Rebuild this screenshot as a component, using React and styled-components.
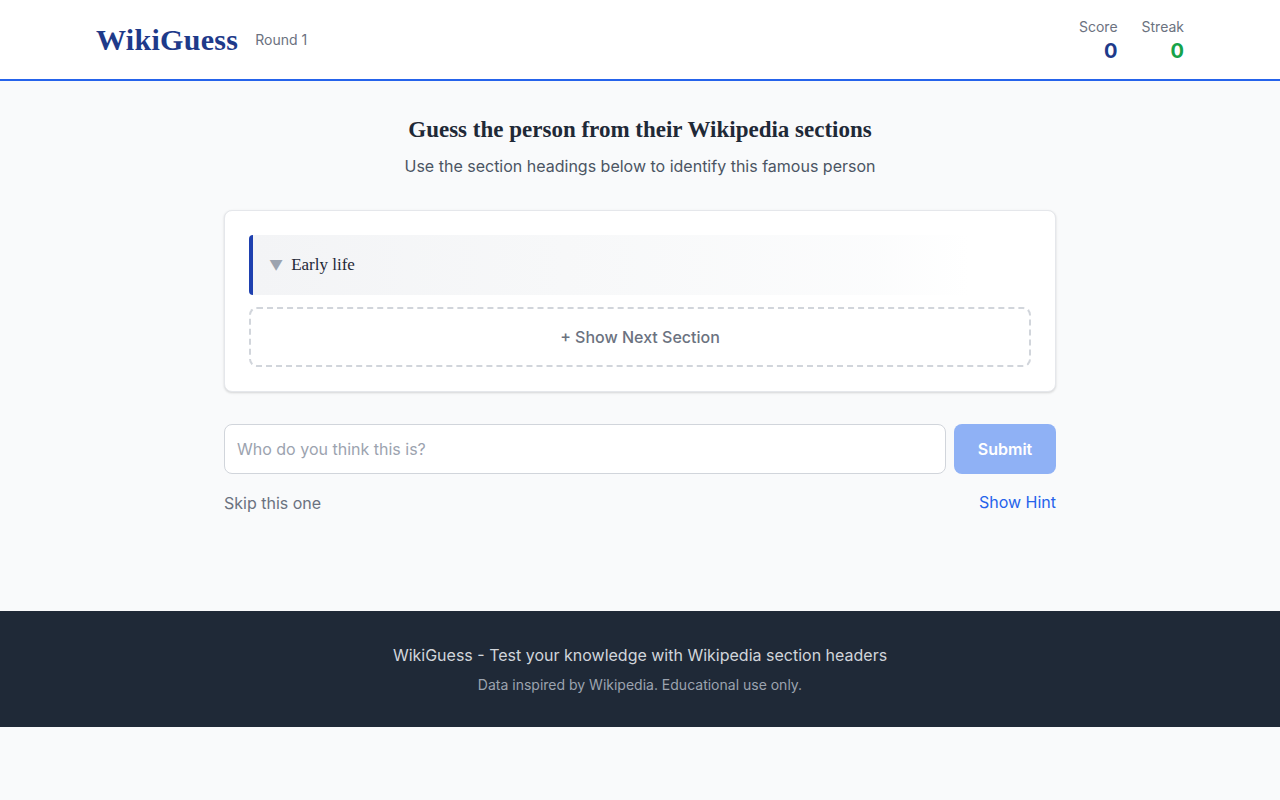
import React from "react";
import styled, { createGlobalStyle } from "styled-components";

const GlobalStyle = createGlobalStyle`
  * { box-sizing: border-box; }
  body {
    margin: 0;
    background: #f9fafb;
    font-family: Inter, "Noto Sans", sans-serif;
    color: #1f2937;
  }
`;

const serif = `"Liberation Serif", "DejaVu Serif", serif`;

const Page = styled.div`
  display: flex;
  flex-direction: column;
`;

const Header = styled.header`
  background: #ffffff;
  border-bottom: 2px solid #2563eb;
  height: 81px;
`;

const HeaderInner = styled.div`
  width: 1088px;
  margin: 0 auto;
  height: 79px;
  display: flex;
  align-items: center;
  justify-content: space-between;
`;

const Brand = styled.div`
  display: flex;
  align-items: center;
  gap: 17px;
`;

const Logo = styled.h1`
  margin: 0;
  font-family: ${serif};
  font-size: 30px;
  font-weight: 700;
  color: #1e3a8a;
  letter-spacing: 0.3px;
`;

const Round = styled.span`
  font-size: 14px;
  color: #6b7280;
`;

const Stats = styled.div`
  display: flex;
  gap: 24px;
  padding-top: 2px;
`;

const Stat = styled.div`
  display: flex;
  flex-direction: column;
  align-items: flex-end;
`;

const StatLabel = styled.span`
  font-size: 14px;
  line-height: 20px;
  color: #6b7280;
`;

const StatValue = styled.span`
  font-size: 20px;
  line-height: 28px;
  font-weight: 700;
  color: ${(p) => p.$color};
`;

const Main = styled.main`
  width: 832px;
  margin: 0 auto;
  padding: 32px 0 96px;
`;

const Title = styled.h2`
  margin: 0;
  text-align: center;
  font-family: ${serif};
  font-size: 23px;
  line-height: 33px;
  font-weight: 700;
  color: #1f2937;
`;

const Subtitle = styled.p`
  margin: 8px 0 0;
  text-align: center;
  font-size: 16px;
  line-height: 24px;
  color: #4b5563;
`;

const Card = styled.section`
  margin-top: 32px;
  background: #ffffff;
  border: 1px solid #e5e7eb;
  border-radius: 8px;
  box-shadow: 0 1px 3px rgba(0, 0, 0, 0.1), 0 1px 2px rgba(0, 0, 0, 0.06);
  padding: 24px;
  display: flex;
  flex-direction: column;
  gap: 12px;
`;

const SectionItem = styled.div`
  height: 60px;
  display: flex;
  align-items: center;
  gap: 8px;
  padding-left: 16px;
  border-left: 4px solid #1e40af;
  border-radius: 4px;
  background: linear-gradient(90deg, #f3f4f6 0%, #f7f8f9 40%, rgba(249, 250, 251, 0.6) 80%, rgba(255, 255, 255, 0) 92%);
`;

const Caret = styled.span`
  color: #9ca3af;
  font-size: 14px;
  line-height: 1;
  margin-top: 2px;
`;

const SectionTitle = styled.span`
  font-family: ${serif};
  font-size: 17px;
  color: #1f2937;
`;

const NextButton = styled.button`
  height: 60px;
  border: 2px dashed #d1d5db;
  border-radius: 8px;
  background: transparent;
  font-family: Inter, sans-serif;
  font-size: 16px;
  font-weight: 500;
  color: #6b7280;
  cursor: pointer;
`;

const GuessRow = styled.form`
  margin-top: 32px;
  display: flex;
  gap: 8px;
`;

const GuessInput = styled.input`
  flex: 1;
  height: 50px;
  border: 1px solid #d1d5db;
  border-radius: 8px;
  padding: 0 12px;
  font-family: Inter, sans-serif;
  font-size: 16px;
  color: #1f2937;
  background: #ffffff;
  &::placeholder { color: #9ca3af; }
`;

const SubmitButton = styled.button`
  width: 102px;
  height: 50px;
  border: none;
  border-radius: 8px;
  background: #8fb1f5;
  color: #ffffff;
  font-family: Inter, sans-serif;
  font-size: 16px;
  font-weight: 600;
`;

const Actions = styled.div`
  margin-top: 15px;
  display: flex;
  justify-content: space-between;
  align-items: center;
`;

const LinkButton = styled.button`
  border: none;
  background: none;
  padding: 0;
  font-family: Inter, sans-serif;
  font-size: 16px;
  line-height: 24px;
  color: ${(p) => p.$color};
  margin-top: ${(p) => p.$offset || 0}px;
  cursor: pointer;
`;

const Footer = styled.footer`
  background: #1f2937;
  padding: 32px 0;
  text-align: center;
`;

const FooterMain = styled.p`
  margin: 0;
  font-size: 16px;
  line-height: 24px;
  color: #d1d5db;
`;

const FooterNote = styled.p`
  margin: 8px 0 0;
  font-size: 14px;
  line-height: 20px;
  color: #9ca3af;
`;

export default function App() {
  return (
    <Page>
      <GlobalStyle />
      <Header>
        <HeaderInner>
          <Brand>
            <Logo>WikiGuess</Logo>
            <Round>Round 1</Round>
          </Brand>
          <Stats>
            <Stat>
              <StatLabel>Score</StatLabel>
              <StatValue $color="#1e3a8a">0</StatValue>
            </Stat>
            <Stat>
              <StatLabel>Streak</StatLabel>
              <StatValue $color="#16a34a">0</StatValue>
            </Stat>
          </Stats>
        </HeaderInner>
      </Header>
      <Main>
        <Title>Guess the person from their Wikipedia sections</Title>
        <Subtitle>Use the section headings below to identify this famous person</Subtitle>
        <Card>
          <SectionItem>
            <Caret>▼</Caret>
            <SectionTitle>Early life</SectionTitle>
          </SectionItem>
          <NextButton type="button">+ Show Next Section</NextButton>
        </Card>
        <GuessRow onSubmit={(e) => e.preventDefault()}>
          <GuessInput placeholder="Who do you think this is?" />
          <SubmitButton type="submit">Submit</SubmitButton>
        </GuessRow>
        <Actions>
          <LinkButton type="button" $color="#6b7280" $offset={2}>Skip this one</LinkButton>
          <LinkButton type="button" $color="#2563eb">Show Hint</LinkButton>
        </Actions>
      </Main>
      <Footer>
        <FooterMain>WikiGuess - Test your knowledge with Wikipedia section headers</FooterMain>
        <FooterNote>Data inspired by Wikipedia. Educational use only.</FooterNote>
      </Footer>
    </Page>
  );
}
